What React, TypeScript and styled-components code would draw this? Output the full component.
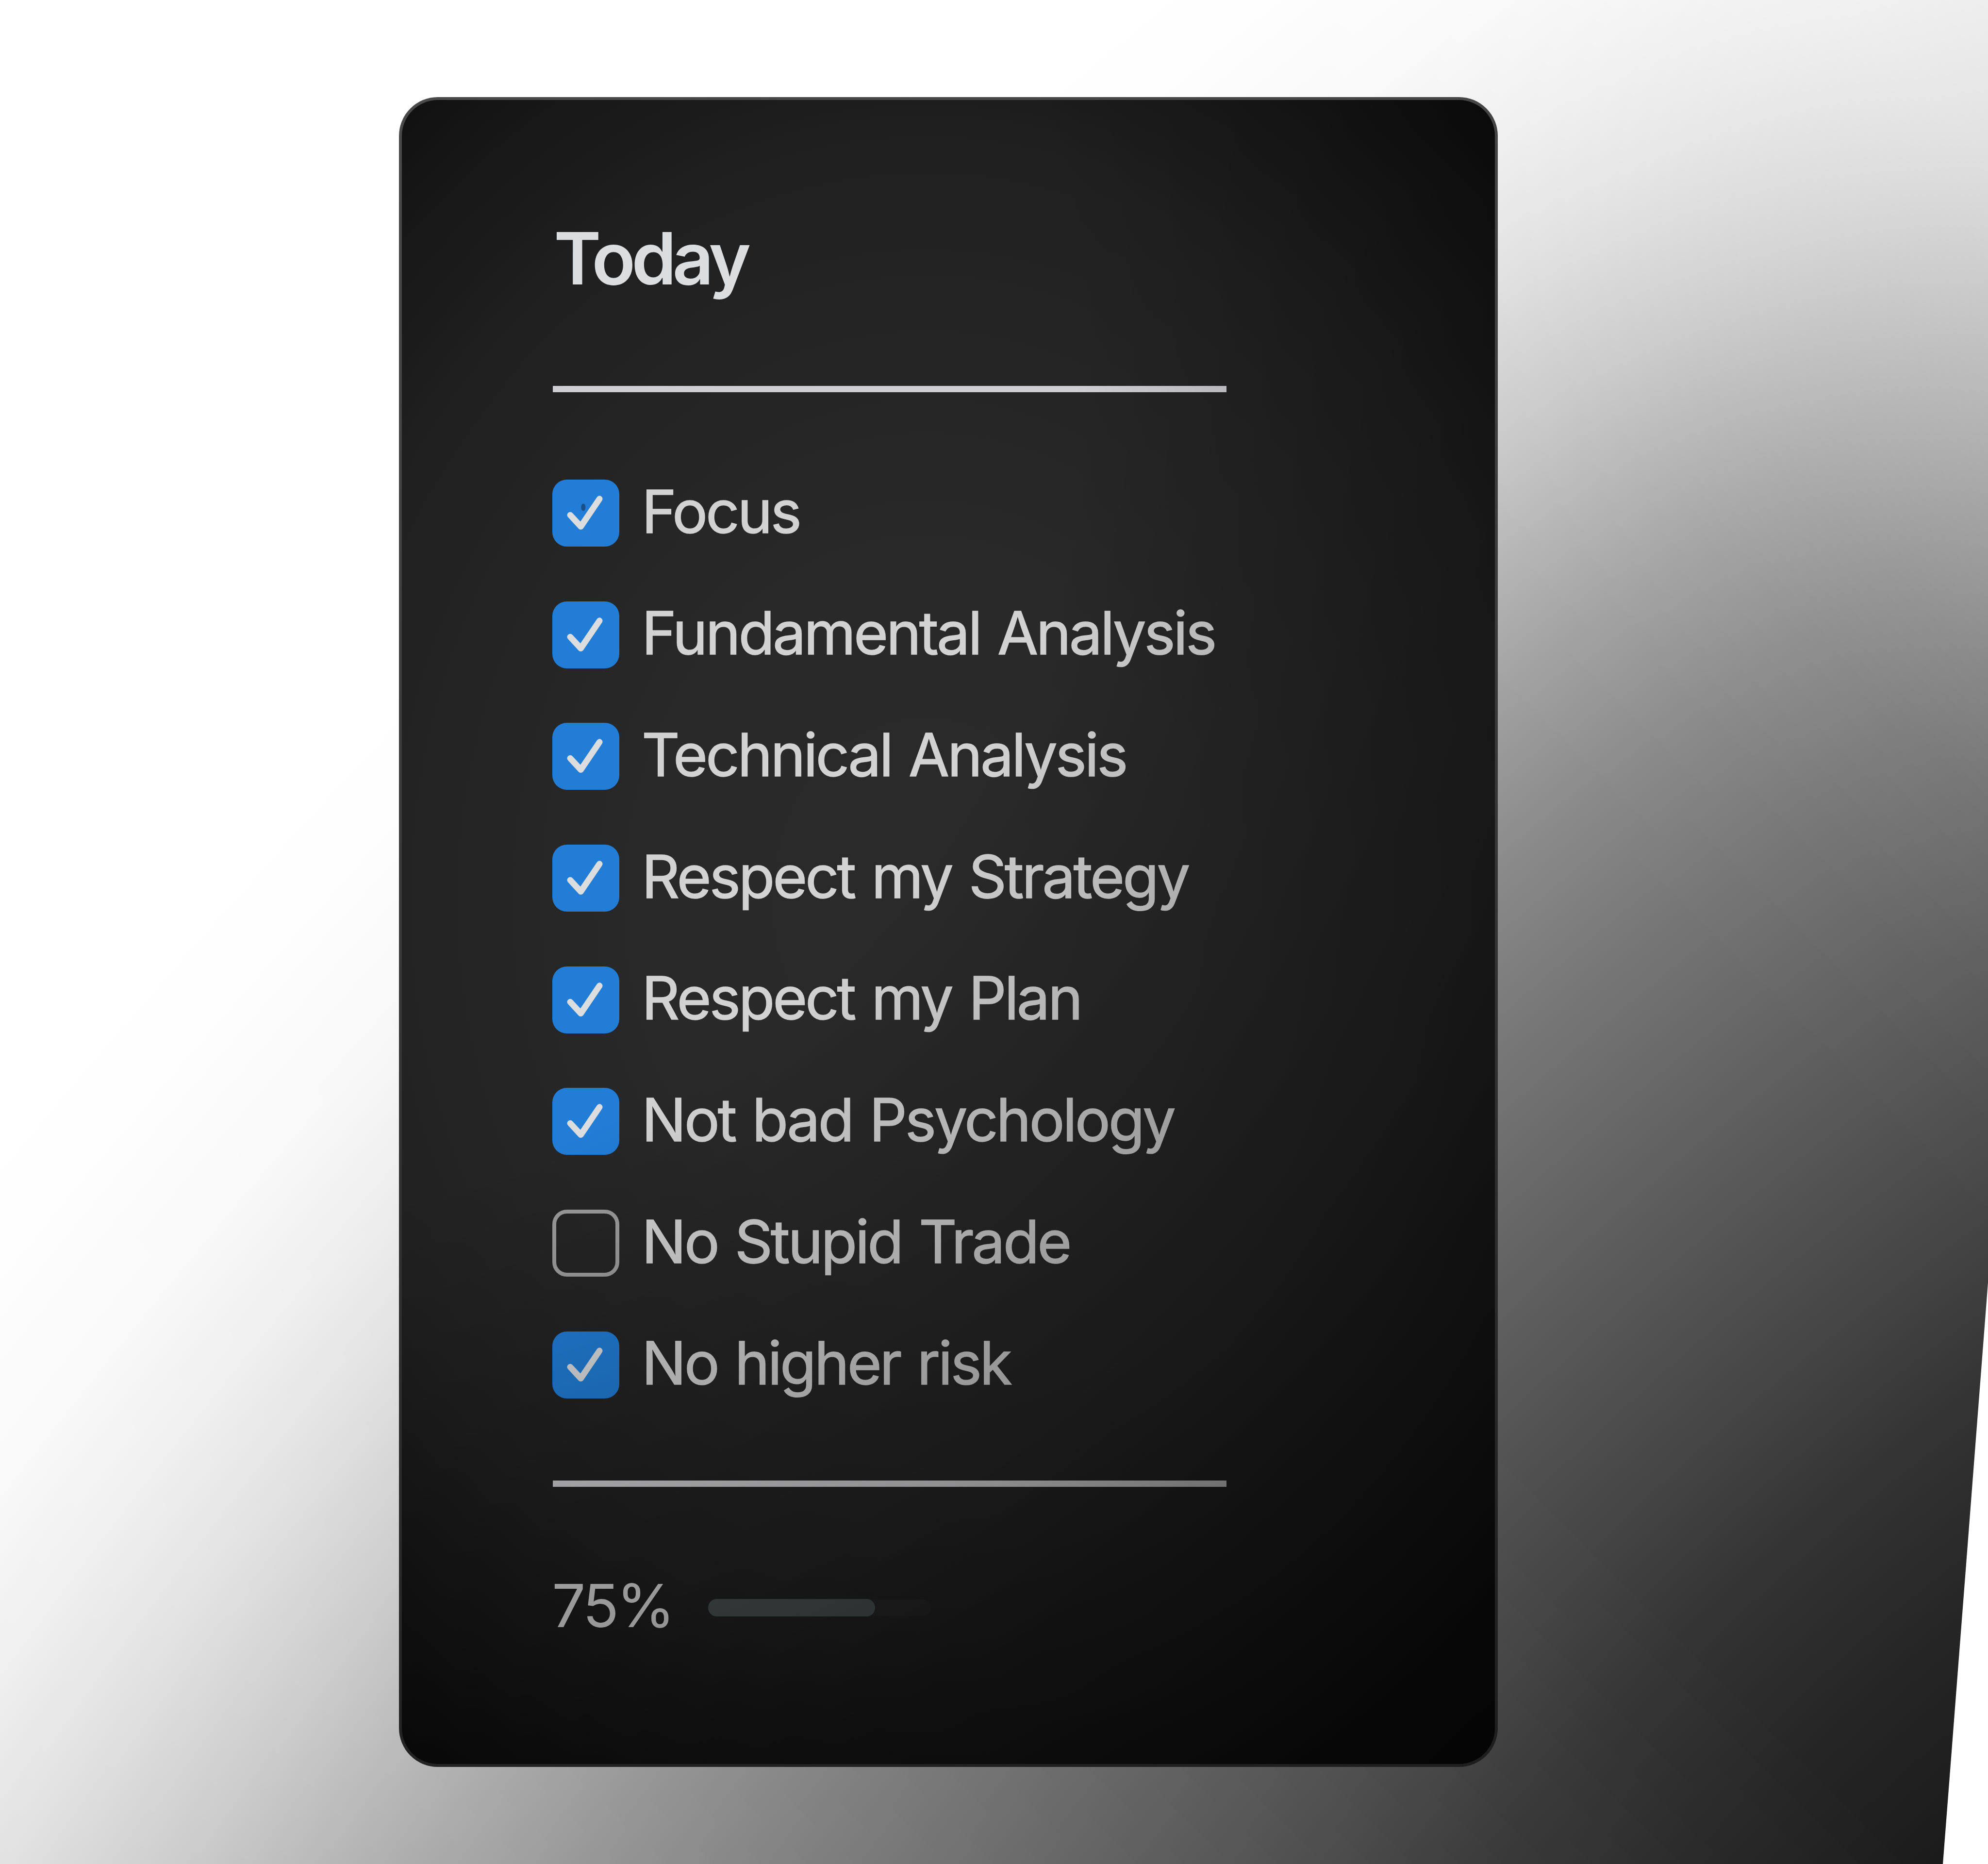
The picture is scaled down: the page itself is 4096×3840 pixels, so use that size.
import { useState } from 'react';
import styled, { createGlobalStyle } from 'styled-components';

interface Task {
    id: number;
    title: string;
    done: boolean;
    marked?: boolean;
}

const initialTasks: Task[] = [
    { id: 1, title: 'Focus', done: true, marked: true },
    { id: 2, title: 'Fundamental Analysis', done: true },
    { id: 3, title: 'Technical Analysis', done: true },
    { id: 4, title: 'Respect my Strategy', done: true },
    { id: 5, title: 'Respect my Plan', done: true },
    { id: 6, title: 'Not bad Psychology', done: true },
    { id: 7, title: 'No Stupid Trade', done: false },
    { id: 8, title: 'No higher risk', done: true },
];

const progress = 75;

function App() {
    const [tasks, setTasks] = useState<Task[]>(initialTasks);

    const toggleTask = (id: number) => {
        setTasks((prev) => prev.map((task) => (task.id === id ? { ...task, done: !task.done } : task)));
    };

    return (
        <>
            <GlobalStyle />
            <Page>
                <Backdrop>
                    <Shade />
                </Backdrop>
                <Card>
                    <Title>Today</Title>
                    <Divider />
                    <TaskList>
                        {tasks.map((task) => (
                            <TaskRow key={task.id} onClick={() => toggleTask(task.id)}>
                                <CheckBox $done={task.done}>
                                    {task.done && (
                                        <svg viewBox="0 0 24 24" width="138" height="138" fill="none">
                                            {task.marked && <ellipse cx="11.1" cy="9.9" rx="0.8" ry="1.3" fill="#1d4f87" />}
                                            <path
                                                d="M6.4 12.7 L10.2 16.8 L16.9 6.9"
                                                stroke="#dcdddf"
                                                strokeWidth="2.2"
                                                strokeLinecap="round"
                                                strokeLinejoin="round"
                                            />
                                        </svg>
                                    )}
                                </CheckBox>
                                <TaskTitle>{task.title}</TaskTitle>
                            </TaskRow>
                        ))}
                    </TaskList>
                    <Divider />
                    <Footer>
                        <Percent>{progress}%</Percent>
                        <Track>
                            <Bar style={{ width: `${progress}%` }} />
                        </Track>
                    </Footer>
                </Card>
            </Page>
        </>
    );
}

export default App;

const GlobalStyle = createGlobalStyle`
    * {
        box-sizing: border-box;
    }

    body {
        margin: 0;
        background-color: #fff;
        font-family: Inter, 'Liberation Sans', sans-serif;
    }
`;

const Page = styled.main`
    position: relative;

    width: 4096px;
    height: 3840px;
    padding: 200px 0 0 822px;

    overflow: hidden;
`;

/* slanted cut on the lower right side, fading out to the upper right */
const Backdrop = styled.div`
    position: absolute;
    inset: 0;

    overflow: hidden;
    clip-path: polygon(0 0, 4096px 0, 4096px 2642px, 4003px 3840px, 0 3840px);
    mask-image: linear-gradient(
        45deg,
        rgba(0, 0, 0, 0.92) 0%,
        rgba(0, 0, 0, 0.88) 13%,
        rgba(0, 0, 0, 0.95) 35%,
        #000 50%,
        #000 68%,
        rgba(0, 0, 0, 0.98) 74%,
        rgba(0, 0, 0, 0.94) 79%,
        rgba(0, 0, 0, 0.88) 82.5%,
        rgba(0, 0, 0, 0.79) 86.1%,
        rgba(0, 0, 0, 0.68) 90.1%,
        rgba(0, 0, 0, 0.6) 92.6%,
        rgba(0, 0, 0, 0.48) 96.1%,
        rgba(0, 0, 0, 0.4) 100%
    );
`;

const Shade = styled.div`
    position: absolute;
    left: -4425px;
    top: -459px;

    width: 17732px;
    height: 9800px;

    transform: rotate(-45deg);
    background: radial-gradient(
        8866px 4433px at center,
        #141414 0%,
        #1b1b1b 16.7%,
        #262626 25%,
        #343434 32.5%,
        #424242 37.5%,
        #5c5c5c 47.9%,
        #777777 58.3%,
        #8a8a8a 64.6%,
        #a1a1a1 70.8%,
        #b3b3b3 75%,
        #c6c6c6 79.2%,
        #dfdfdf 85.8%,
        #eeeeee 91%,
        #f8f8f8 96%,
        #fdfdfd 101%,
        #ffffff 106%
    );
`;

const Card = styled.section`
    position: relative;

    width: 2264px;
    height: 3440px;
    padding: 237px 309px 0;

    border: 6px solid transparent;
    border-radius: 80px;
    background:
        radial-gradient(
                1829px 2220px at 1080px 1650px,
                #2a2a2a 0%,
                #292929 30%,
                #242424 55%,
                #202020 70%,
                #1b1b1b 78%,
                #181818 84%,
                #131313 91%,
                #0e0e0e 98%
            )
            padding-box,
        linear-gradient(170deg, #4a4a4a, #363636 50%, #1e1e1e) border-box;

    /* vignette over the whole card, darker to the lower right */
    &::after {
        content: '';
        position: absolute;
        inset: 0;

        border-radius: 74px;
        pointer-events: none;
        background: radial-gradient(
            circle 3660px at -300px 580px,
            rgba(0, 0, 0, 0) 46%,
            rgba(0, 0, 0, 0.15) 58%,
            rgba(0, 0, 0, 0.25) 67%,
            rgba(0, 0, 0, 0.3) 73%,
            rgba(0, 0, 0, 0.46) 83%,
            rgba(0, 0, 0, 0.64) 100%
        );
    }
`;

const Title = styled.h1`
    margin: 0 0 172px;
    padding-left: 4px;

    color: #dcdddf;

    font-size: 148px;
    font-weight: 600;
    line-height: 180px;
    letter-spacing: -8px;
`;

const Divider = styled.hr`
    width: 1388px;
    height: 13px;
    margin: 0 0 0 2px;

    border: none;
    background-color: #cfcfd1;
`;

const TaskList = styled.ul`
    margin: 180px 0 169px;
    padding: 0;

    display: flex;
    flex-direction: column;
    gap: 112.7px;

    list-style: none;
`;

const TaskRow = styled.li`
    height: 138px;
    padding-left: 1px;

    display: flex;
    align-items: center;
    gap: 46px;

    cursor: pointer;
`;

const CheckBox = styled.span<{ $done: boolean }>`
    flex: none;

    width: 138px;
    height: 138px;

    border: ${({ $done }) => ($done ? 'none' : '8px solid #9c9c9c')};
    border-radius: 30px;
    background-color: ${({ $done }) => ($done ? '#217dd6' : 'transparent')};

    svg {
        display: block;
    }
`;

const TaskTitle = styled.span`
    padding-bottom: 7px;

    color: #d2d2d3;

    font-size: 122px;
    font-weight: 400;
    line-height: 132px;
    letter-spacing: -4.2px;
    word-spacing: 5px;
    white-space: nowrap;
    -webkit-text-stroke: 1.5px currentColor;
`;

const Footer = styled.footer`
    height: 140px;
    margin-top: 178px;

    display: flex;
    align-items: center;
`;

const Percent = styled.span`
    width: 322px;
    padding-bottom: 5px;

    color: #d8d8d8;

    font-size: 123px;
    font-weight: 400;
    line-height: 132px;
    letter-spacing: -5px;
`;

const Track = styled.div`
    width: 459px;
    height: 36px;
    margin-top: 2px;

    border-radius: 18px;
    background-color: #262626;
`;

const Bar = styled.div`
    height: 100%;

    border-radius: 18px;
    background-color: #475050;
`;
